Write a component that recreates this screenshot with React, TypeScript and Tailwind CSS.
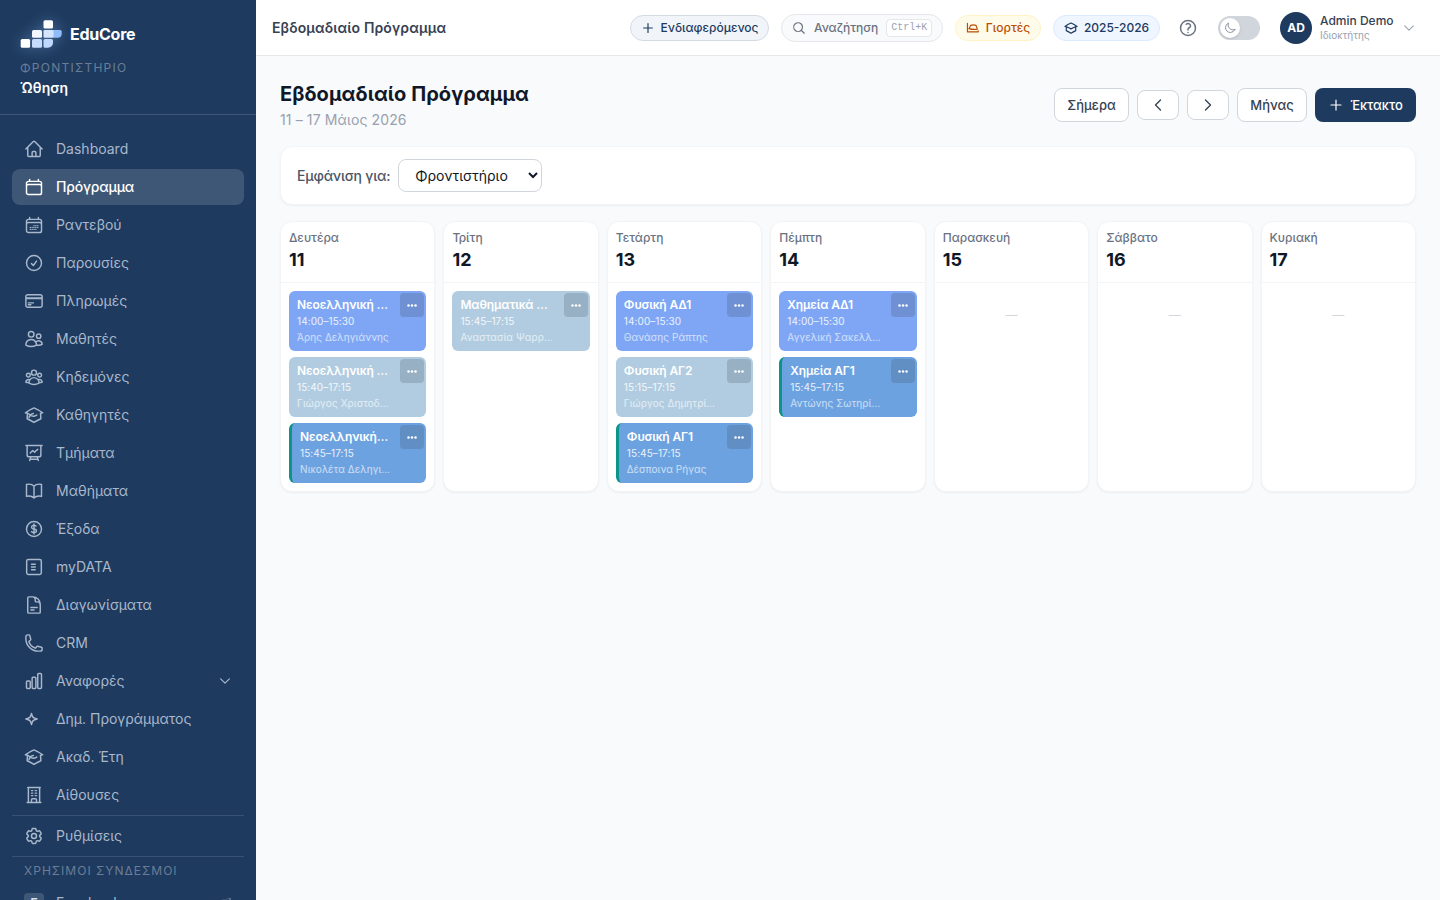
import type { JSX, ReactNode } from "react";
import {
    HiOutlineHome,
    HiOutlineCalendar,
    HiOutlineCalendarDays,
    HiOutlineCheckCircle,
    HiOutlineCreditCard,
    HiOutlineUsers,
    HiOutlineUserGroup,
    HiOutlinePresentationChartLine,
    HiOutlineBookOpen,
    HiOutlineCurrencyDollar,
    HiOutlineDocumentText,
    HiOutlinePhone,
    HiOutlineChartBar,
    HiOutlineBuildingOffice,
    HiOutlineCog6Tooth,
    HiOutlineChevronDown,
    HiOutlineChevronLeft,
    HiOutlineChevronRight,
    HiOutlinePlus,
    HiOutlineMagnifyingGlass,
    HiOutlineQuestionMarkCircle,
    HiOutlineMoon,
    HiOutlineArrowTopRightOnSquare,
} from "react-icons/hi2";

type IconProps = { className?: string; children?: ReactNode };

function Svg({ className, children }: IconProps): JSX.Element {
    return (
        <svg
            className={className}
            viewBox="0 0 24 24"
            fill="none"
            stroke="currentColor"
            strokeWidth="1.5"
            strokeLinecap="round"
            strokeLinejoin="round"
        >
            {children}
        </svg>
    );
}

const TeacherIcon = ({ className }: IconProps) => (
    <Svg className={className}>
        <path d="M4.26 10.147a60.436 60.436 0 00-.491 6.347A48.627 48.627 0 0112 20.904a48.627 48.627 0 018.232-4.41 60.46 60.46 0 00-.491-6.347m-15.482 0a50.57 50.57 0 00-2.658-.813A59.905 59.905 0 0112 3.493a59.902 59.902 0 0110.399 5.84c-.896.248-1.783.52-2.658.814" />
        <path d="M4.26 10.147l3.500 1.700M6 15.200c.2-2.200 2-4.200 5.200-5M7.500 12.300c2.300 1.500 5 1.400 7.800-.2" />
    </Svg>
);

const CapIcon = ({ className }: IconProps) => (
    <Svg className={className}>
        <path
            strokeWidth="2"
            d="M4.26 10.147a60.436 60.436 0 00-.491 6.347A48.627 48.627 0 0112 20.904a48.627 48.627 0 018.232-4.41 60.46 60.46 0 00-.491-6.347m-15.482 0a50.57 50.57 0 00-2.658-.813A59.905 59.905 0 0112 3.493a59.902 59.902 0 0110.399 5.84c-.896.248-1.783.52-2.658.814m-15.482 0A50.697 50.697 0 0112 13.489a50.702 50.702 0 017.74-3.342"
        />
    </Svg>
);

const LedgerIcon = ({ className }: IconProps) => (
    <Svg className={className}>
        <rect x="3.2" y="3" width="17.6" height="18" rx="2" />
        <path d="M9 8.75h4.5M9 12h4.5M9 15.25h4.5" />
    </Svg>
);

const SparkIcon = ({ className }: IconProps) => (
    <Svg className={className}>
        <path d="M9.813 15.904L9 18.75l-.813-2.846a4.5 4.5 0 00-3.09-3.09L2.25 12l2.846-.813a4.5 4.5 0 003.09-3.09L9 5.25l.813 2.846a4.5 4.5 0 003.09 3.09L15.75 12l-2.846.813a4.5 4.5 0 00-3.09 3.09z" />
    </Svg>
);

const FeastIcon = ({ className }: IconProps) => (
    <Svg className={className}>
        <path strokeWidth="2" d="M2.500 4v14.500h18.500v-1.500M5 13c1.200-.5 1.800-3.500 3-5.500 2.500-1 6.500-1 9 0 1.200 2 1.500 4 2.500 6.500-4.500.8-9.500.6-14.500-1" />
    </Svg>
);

function Logo(): JSX.Element {
    return (
        <svg className="h-7 w-[42px] drop-shadow-[0_0_7px_rgba(147,197,253,0.4)]" viewBox="0 0 42 28">
            <rect x="0.700" y="19" width="9.400" height="8.700" rx="1.500" fill="#ffffff" />
            <rect x="12" y="10" width="10" height="7.800" rx="1.500" fill="#f1f6ff" />
            <rect x="12" y="19" width="10" height="8.700" rx="1.500" fill="#c7dcfd" />
            <rect x="23.500" y="0.200" width="9.500" height="8.300" rx="1.500" fill="#ffffff" />
            <path d="M33 10h7.200a1.500 1.500 0 011.500 1.500v2.300a4 4 0 01-4 4H33z" fill="#8fbcfb" />
            <rect x="23.500" y="10" width="10" height="7.800" rx="1.300" fill="#d5e5fe" />
            <path d="M25 19h6.500a1.500 1.500 0 011.500 1.500v2.200a5 5 0 01-5 5h-3a1.500 1.500 0 01-1.500-1.500v-5.700A1.500 1.500 0 0125 19z" fill="#bfd8fd" />
        </svg>
    );
}

const menu = [
    { label: "Dashboard", Icon: HiOutlineHome },
    { label: "Πρόγραμμα", Icon: HiOutlineCalendar, active: true },
    { label: "Ραντεβού", Icon: HiOutlineCalendarDays },
    { label: "Παρουσίες", Icon: HiOutlineCheckCircle },
    { label: "Πληρωμές", Icon: HiOutlineCreditCard },
    { label: "Μαθητές", Icon: HiOutlineUsers },
    { label: "Κηδεμόνες", Icon: HiOutlineUserGroup },
    { label: "Καθηγητές", Icon: TeacherIcon },
    { label: "Τμήματα", Icon: HiOutlinePresentationChartLine },
    { label: "Μαθήματα", Icon: HiOutlineBookOpen },
    { label: "Έξοδα", Icon: HiOutlineCurrencyDollar },
    { label: "myDATA", Icon: LedgerIcon },
    { label: "Διαγωνίσματα", Icon: HiOutlineDocumentText },
    { label: "CRM", Icon: HiOutlinePhone },
    { label: "Αναφορές", Icon: HiOutlineChartBar, expandable: true },
    { label: "Δημ. Προγράμματος", Icon: SparkIcon },
    { label: "Ακαδ. Έτη", Icon: TeacherIcon },
    { label: "Αίθουσες", Icon: HiOutlineBuildingOffice },
];

type Tone = "indigo" | "pale" | "blue";
type Lesson = { title: string; time: string; teacher: string; tone: Tone };

const tones: Record<Tone, string> = {
    indigo: "bg-[#7ea6f4]",
    pale: "bg-[#b1cce0]",
    blue: "bg-[#6ca2e0] border-l-3 border-[#0d9488]",
};

const days: { name: string; date: number; lessons: Lesson[] }[] = [
    {
        name: "Δευτέρα",
        date: 11,
        lessons: [
            { title: "Νεοελληνική …", time: "14:00–15:30", teacher: "Άρης Δεληγιάννης", tone: "indigo" },
            { title: "Νεοελληνική …", time: "15:40–17:15", teacher: "Γιώργος Χριστοδ…", tone: "pale" },
            { title: "Νεοελληνική…", time: "15:45–17:15", teacher: "Νικολέτα Δεληγι…", tone: "blue" },
        ],
    },
    {
        name: "Τρίτη",
        date: 12,
        lessons: [{ title: "Μαθηματικά …", time: "15:45–17:15", teacher: "Αναστασία Ψαρρ…", tone: "pale" }],
    },
    {
        name: "Τετάρτη",
        date: 13,
        lessons: [
            { title: "Φυσική ΑΔ1", time: "14:00–15:30", teacher: "Θανάσης Ράπτης", tone: "indigo" },
            { title: "Φυσική ΑΓ2", time: "15:15–17:15", teacher: "Γιώργος Δημητρί…", tone: "pale" },
            { title: "Φυσική ΑΓ1", time: "15:45–17:15", teacher: "Δέσποινα Ρήγας", tone: "blue" },
        ],
    },
    {
        name: "Πέμπτη",
        date: 14,
        lessons: [
            { title: "Χημεία ΑΔ1", time: "14:00–15:30", teacher: "Αγγελική Σακελλ…", tone: "indigo" },
            { title: "Χημεία ΑΓ1", time: "15:45–17:15", teacher: "Αντώνης Σωτηρί…", tone: "blue" },
        ],
    },
    { name: "Παρασκευή", date: 15, lessons: [] },
    { name: "Σάββατο", date: 16, lessons: [] },
    { name: "Κυριακή", date: 17, lessons: [] },
];

function Sidebar(): JSX.Element {
    return (
        <aside className="flex h-full w-64 shrink-0 flex-col overflow-hidden bg-[#1e3a5f] text-[#a9b8cb]">
            <div className="h-[115px] shrink-0 border-b border-white/15 px-5 pt-5">
                <div className="flex items-center gap-2">
                    <Logo />
                    <span className="text-base font-bold tracking-[-0.25px] text-white">EduCore</span>
                </div>
                <div className="mt-3 text-xs leading-4 tracking-[1.25px] text-white/35">ΦΡΟΝΤΙΣΤΗΡΙΟ</div>
                <div className="mt-0.5 text-sm leading-5 font-semibold tracking-[0.1px] text-white">Ώθηση</div>
            </div>
            <nav className="flex flex-col gap-0.5 px-3 pt-4">
                {menu.map(({ label, Icon, active, expandable }) => (
                    <a
                        key={label}
                        className={
                            active
                                ? "flex h-9 items-center gap-3 rounded-lg bg-white/15 px-3 text-sm font-medium tracking-[-0.2px] text-white"
                                : "flex h-9 items-center gap-3 rounded-lg px-3 text-sm"
                        }
                    >
                        <Icon className="size-5 shrink-0 [stroke-width:1.75]" />
                        <span className="flex-1">{label}</span>
                        {expandable && <HiOutlineChevronDown className="size-3.5 [stroke-width:2]" />}
                    </a>
                ))}
            </nav>
            <div className="mx-3 mt-0.5 border-t border-white/12 pt-0.5">
                <a className="flex h-9 items-center gap-3 px-3 text-sm">
                    <HiOutlineCog6Tooth className="size-5 [stroke-width:1.75]" />
                    Ρυθμίσεις
                </a>
            </div>
            <div className="mx-3 mt-0.5 border-t border-white/12 px-3 pt-1.5">
                <div className="text-xs leading-4 tracking-[1.02px] text-white/35">ΧΡΗΣΙΜΟΙ ΣΥΝΔΕΣΜΟΙ</div>
                <a className="mt-3.5 flex items-center gap-3 text-sm leading-5">
                    <span className="flex size-5 items-center justify-center rounded bg-white/15 text-xs font-bold text-white/80">
                        F
                    </span>
                    <span className="flex-1">Facebook</span>
                    <HiOutlineArrowTopRightOnSquare className="size-3 opacity-50" />
                </a>
            </div>
        </aside>
    );
}

function Topbar(): JSX.Element {
    return (
        <header className="flex h-14 shrink-0 items-center border-b border-gray-200 bg-white pr-6 pl-4">
            <h2 className="flex-1 text-sm font-semibold tracking-[0.13px] text-gray-700">Εβδομαδιαίο Πρόγραμμα</h2>
            <div className="flex items-center gap-3 text-xs font-medium">
                <button className="flex h-[26px] w-[139px] items-center justify-center gap-1.5 rounded-full border border-[#d5dbe3] bg-slate-100 text-[#1e3a5f]">
                    <HiOutlinePlus className="size-3.5 [stroke-width:2]" />
                    Ενδιαφερόμενος
                </button>
                <button className="flex h-7 w-[162px] items-center rounded-full border border-gray-200 bg-gray-50 pl-2.5 text-gray-500">
                    <HiOutlineMagnifyingGlass className="size-3.5 [stroke-width:2]" />
                    <span className="ml-2">Αναζήτηση</span>
                    <kbd className="ml-2 flex h-[18px] items-center rounded border border-gray-200 bg-white px-1 font-['Liberation_Mono',monospace] text-[10px] font-normal text-gray-400">
                        Ctrl+K
                    </kbd>
                </button>
                <button className="flex h-[26px] w-[86px] items-center justify-center gap-1.5 rounded-full border border-amber-100 bg-amber-50 text-amber-700">
                    <FeastIcon className="size-3.5" />
                    Γιορτές
                </button>
                <button className="flex h-[26px] w-[107px] items-center justify-center gap-1.5 rounded-full border border-blue-100 bg-blue-50 text-[#1e3a5f]">
                    <CapIcon className="size-3.5" />
                    2025-2026
                </button>
            </div>
            <button className="ml-3 p-1.5 text-gray-500">
                <HiOutlineQuestionMarkCircle className="size-5 [stroke-width:1.8]" />
            </button>
            <div className="ml-3.5 flex h-6 w-[42px] items-center rounded-full bg-gray-300 px-0.5">
                <span className="flex size-5 items-center justify-center rounded-full bg-white text-gray-500 shadow">
                    <HiOutlineMoon className="size-3" />
                </span>
            </div>
            <div className="ml-5 flex items-center gap-2">
                <span className="flex size-8 items-center justify-center rounded-full bg-[#1e3a5f] text-xs font-bold text-white">
                    AD
                </span>
                <div className="w-[74px] whitespace-nowrap">
                    <div className="text-xs leading-[15px] font-medium text-gray-700">Admin Demo</div>
                    <div className="text-[10px] leading-[15px] text-gray-400">Ιδιοκτήτης</div>
                </div>
                <HiOutlineChevronDown className="size-3.5 text-gray-400 [stroke-width:1.8]" />
            </div>
        </header>
    );
}

function LessonCard({ title, time, teacher, tone }: Lesson): JSX.Element {
    return (
        <div className={`relative h-[60px] overflow-hidden rounded-md px-2 py-1.5 whitespace-nowrap text-white ${tones[tone]}`}>
            <div className="text-xs leading-4 font-semibold tracking-[-0.12px]">{title}</div>
            <div className="text-[10px] leading-4 tracking-[0.08px] text-white/85">{time}</div>
            <div className="text-[10px] leading-4 tracking-[0.1px] text-white/65">{teacher}</div>
            <button className="absolute top-0.5 right-0.5 flex size-6 items-center justify-center rounded bg-[#374151]/20">
                <svg className="h-[3px] w-2.5" viewBox="0 0 10 3" fill="currentColor">
                    <circle cx="1.5" cy="1.5" r="1.250" />
                    <circle cx="5" cy="1.5" r="1.250" />
                    <circle cx="8.500" cy="1.5" r="1.250" />
                </svg>
            </button>
        </div>
    );
}

export default function App(): JSX.Element {
    return (
        <div className="flex h-screen w-full overflow-hidden bg-[#f8fafc] font-[Inter,sans-serif]">
            <Sidebar />
            <div className="flex min-w-0 flex-1 flex-col">
                <Topbar />
                <main className="flex flex-col gap-4 p-6">
                    <div className="flex items-center justify-between">
                        <div>
                            <h1 className="text-xl leading-7 font-bold tracking-[0.06px] text-gray-900">Εβδομαδιαίο Πρόγραμμα</h1>
                            <p className="mt-0.5 text-sm leading-5 tracking-[0.12px] text-gray-400">11 – 17 Μάιος 2026</p>
                        </div>
                        <div className="flex items-center gap-2 text-[13px] font-medium text-gray-700">
                            <button className="h-[34px] w-[75px] rounded-lg border border-gray-300 bg-white pt-px">Σήμερα</button>
                            <button className="flex h-[30px] w-[42px] items-center justify-center rounded-lg border border-gray-300 bg-white">
                                <HiOutlineChevronLeft className="size-4 [stroke-width:2]" />
                            </button>
                            <button className="flex h-[30px] w-[42px] items-center justify-center rounded-lg border border-gray-300 bg-white">
                                <HiOutlineChevronRight className="size-4 [stroke-width:2]" />
                            </button>
                            <button className="h-[34px] w-[70px] rounded-lg border border-gray-300 bg-white pt-px">Μήνας</button>
                            <button className="flex h-[34px] w-[101px] items-center justify-center gap-1.5 rounded-lg bg-[#1e3a5f] text-white">
                                <HiOutlinePlus className="size-4 [stroke-width:1.8]" />
                                <span className="pt-px">Έκτακτο</span>
                            </button>
                        </div>
                    </div>
                    <div className="flex items-center gap-2 rounded-xl border border-gray-100 bg-white px-4 py-3 shadow-[0_1px_2px_rgba(0,0,0,0.05)]">
                        <label className="text-sm font-medium tracking-[-0.22px] text-gray-600">Εμφάνιση για:</label>
                        <select className="h-[33px] w-36 rounded-lg border border-gray-300 bg-white px-3 text-sm text-gray-900">
                            <option>Φροντιστήριο</option>
                        </select>
                    </div>
                    <div className="grid grid-cols-7 gap-2">
                        {days.map((day) => (
                            <section
                                key={day.date}
                                className="min-w-0 rounded-xl border border-gray-100 bg-white shadow-[0_1px_2px_rgba(0,0,0,0.05)]"
                            >
                                <div className="border-b border-gray-100 p-2">
                                    <div className="text-xs leading-4 font-medium text-gray-500">{day.name}</div>
                                    <div className="text-lg leading-7 font-bold text-gray-900">{day.date}</div>
                                </div>
                                <div className="flex flex-col gap-1.5 p-2">
                                    {day.lessons.map((lesson) => (
                                        <LessonCard key={lesson.title + lesson.time} {...lesson} />
                                    ))}
                                    {day.lessons.length === 0 && (
                                        <div className="py-4 text-center text-xs leading-4 text-gray-300">—</div>
                                    )}
                                </div>
                            </section>
                        ))}
                    </div>
                </main>
            </div>
        </div>
    );
}
